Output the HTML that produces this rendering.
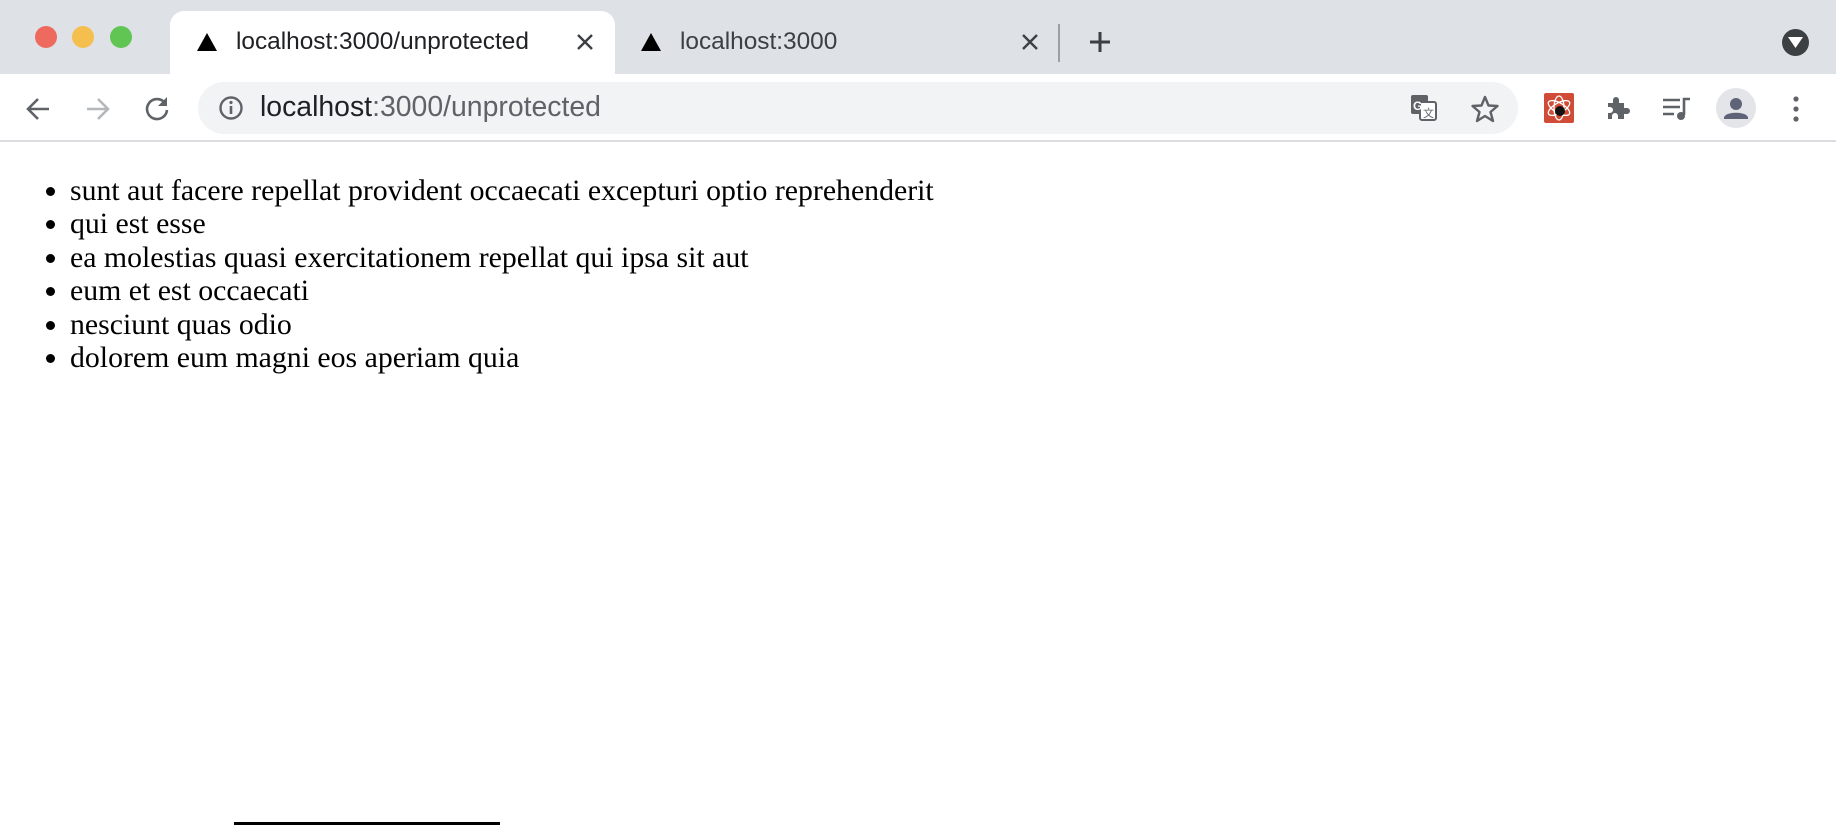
<!DOCTYPE html>
<html><head><meta charset="utf-8"><style>
*{margin:0;padding:0;box-sizing:border-box}
body{width:1836px;height:825px;overflow:hidden;background:#fff;font-family:"Liberation Sans",sans-serif;position:relative}
.abs{position:absolute}
.tabbar{left:0;top:0;width:1836px;height:74px;background:#dee1e6}
.dot{width:22px;height:22px;border-radius:50%;top:26px}
.tab{left:170px;top:11px;width:445px;height:63px;background:#fff;border-radius:14px 14px 0 0}
.tt{font-size:24.4px;color:#3c4043;top:28px}
.toolbar{left:0;top:74px;width:1836px;height:68px;background:#fff;border-bottom:2px solid #dadce0}
.omni{left:198px;top:82px;width:1320px;height:52px;background:#f1f3f4;border-radius:26px}
.url{left:260px;top:91px;font-size:28.4px;color:#5f6368}
ul{position:absolute;left:0;top:174px;font-family:"Liberation Serif",serif;font-size:29.8px;line-height:33.4px;color:#000;padding-left:70px}
</style></head><body>
<div class="abs tabbar"></div>
<div class="abs dot" style="left:35px;background:#ee6a5f"></div>
<div class="abs dot" style="left:72px;background:#f5bf4f"></div>
<div class="abs dot" style="left:110px;background:#61c554"></div>
<div class="abs tab"></div>
<svg class="abs" style="left:197px;top:33px" width="20" height="18"><polygon points="10,0 20,18 0,18" fill="#000"/></svg>
<div class="abs tt" style="left:236px;color:#202124">localhost:3000/unprotected</div>
<svg class="abs" style="left:576px;top:33px" width="18" height="18"><path d="M2 2L16 16M16 2L2 16" stroke="#3c4043" stroke-width="2.4"/></svg>
<svg class="abs" style="left:641px;top:33px" width="20" height="18"><polygon points="10,0 20,18 0,18" fill="#000"/></svg>
<div class="abs tt" style="left:680px">localhost:3000</div>
<svg class="abs" style="left:1021px;top:33px" width="18" height="18"><path d="M2 2L16 16M16 2L2 16" stroke="#3c4043" stroke-width="2.4"/></svg>
<div class="abs" style="left:1058px;top:24px;width:2px;height:38px;background:#9aa0a6"></div>
<svg class="abs" style="left:1088px;top:30px" width="24" height="24"><path d="M12 2V22M2 12H22" stroke="#3c4043" stroke-width="3"/></svg>
<div class="abs" style="left:1782px;top:29px;width:27px;height:27px;border-radius:50%;background:#3c4043"></div>
<svg class="abs" style="left:1788px;top:37px" width="15" height="12"><polygon points="0,0 15,0 7.5,11" fill="#fff"/></svg>
<div class="abs toolbar"></div>
<svg class="abs" style="left:24px;top:95px" width="28" height="28"><path d="M25 14H4M14 4L4 14L14 24" stroke="#5f6368" stroke-width="2.6" fill="none"/></svg>
<svg class="abs" style="left:84px;top:95px" width="28" height="28"><path d="M3 14H24M14 4L24 14L14 24" stroke="#b5b8bb" stroke-width="2.6" fill="none"/></svg>
<svg class="abs" style="left:143px;top:94px" width="28" height="28"><path d="M22 9A10 10 0 1 0 24 16" stroke="#5f6368" stroke-width="2.6" fill="none"/><polygon points="24,3 24,12 15,12" fill="#5f6368"/></svg>
<div class="abs omni"></div>
<svg class="abs" style="left:218px;top:95px" width="26" height="26"><circle cx="13" cy="13" r="10.5" stroke="#5f6368" stroke-width="2.4" fill="none"/><path d="M13 11V19" stroke="#5f6368" stroke-width="2.6"/><circle cx="13" cy="7.5" r="1.6" fill="#5f6368"/></svg>
<div class="abs url"><span style="color:#202124">localhost</span>:3000/unprotected</div>
<svg class="abs" style="left:1410px;top:94px" width="28" height="28"><rect x="1" y="1" width="17" height="19" rx="2" fill="#5f6368"/><rect x="10" y="8" width="16" height="18" rx="2" fill="#fff" stroke="#5f6368" stroke-width="2"/><text x="3" y="16" font-size="12" font-weight="bold" fill="#fff" font-family="Liberation Sans">G</text><text x="13" y="23" font-size="11" fill="#5f6368" font-family="Liberation Sans">文</text></svg>
<svg class="abs" style="left:1470px;top:94px" width="30" height="30"><polygon points="15,3 18.5,11.5 27.5,12 20.5,18 23,27 15,22 7,27 9.5,18 2.5,12 11.5,11.5" stroke="#5f6368" stroke-width="2.4" fill="none" stroke-linejoin="round"/></svg>
<div class="abs" style="left:1544px;top:93px;width:30px;height:30px;background:#d04c36;border-radius:2px"></div>
<svg class="abs" style="left:1544px;top:93px" width="30" height="30"><ellipse cx="15" cy="15" rx="12" ry="5" stroke="#fff" stroke-width="1.3" fill="none" transform="rotate(30 15 15)"/><ellipse cx="15" cy="15" rx="12" ry="5" stroke="#fff" stroke-width="1.3" fill="none" transform="rotate(-30 15 15)"/><ellipse cx="15" cy="15" rx="12" ry="5" stroke="#fff" stroke-width="1.3" fill="none" transform="rotate(90 15 15)"/><circle cx="16" cy="18" r="5" fill="#111"/></svg>
<svg class="abs" style="left:1604px;top:94px" width="28" height="28"><path d="M4 9H9V6A3 3 0 0 1 15 6V9H20V14H23A3 3 0 0 1 23 20H20V25H14V22A3 3 0 0 0 8 22V25H4V19H6A3 3 0 0 0 6 13H4Z" fill="#5f6368"/></svg>
<svg class="abs" style="left:1662px;top:96px" width="30" height="26"><path d="M1 4H18M1 11H18M1 18H12" stroke="#5f6368" stroke-width="2.6"/><path d="M22 19V3H28" stroke="#5f6368" stroke-width="2.6" fill="none"/><circle cx="19" cy="20" r="4" fill="#5f6368"/></svg>
<div class="abs" style="left:1716px;top:88px;width:40px;height:40px;border-radius:50%;background:#e3e5e8"></div>
<svg class="abs" style="left:1716px;top:88px" width="40" height="40"><circle cx="20" cy="16" r="6" fill="#5f6378"/><path d="M8 30C8 23 32 23 32 30V31H8Z" fill="#5f6378"/></svg>
<svg class="abs" style="left:1790px;top:95px" width="12" height="28"><circle cx="6" cy="4" r="2.6" fill="#5f6368"/><circle cx="6" cy="14" r="2.6" fill="#5f6368"/><circle cx="6" cy="24" r="2.6" fill="#5f6368"/></svg>
<ul>
<li>sunt aut facere repellat provident occaecati excepturi optio reprehenderit</li>
<li>qui est esse</li>
<li>ea molestias quasi exercitationem repellat qui ipsa sit aut</li>
<li>eum et est occaecati</li>
<li>nesciunt quas odio</li>
<li>dolorem eum magni eos aperiam quia</li>
</ul>
<div class="abs" style="left:234px;top:822px;width:266px;height:3px;background:#000"></div>
</body></html>
